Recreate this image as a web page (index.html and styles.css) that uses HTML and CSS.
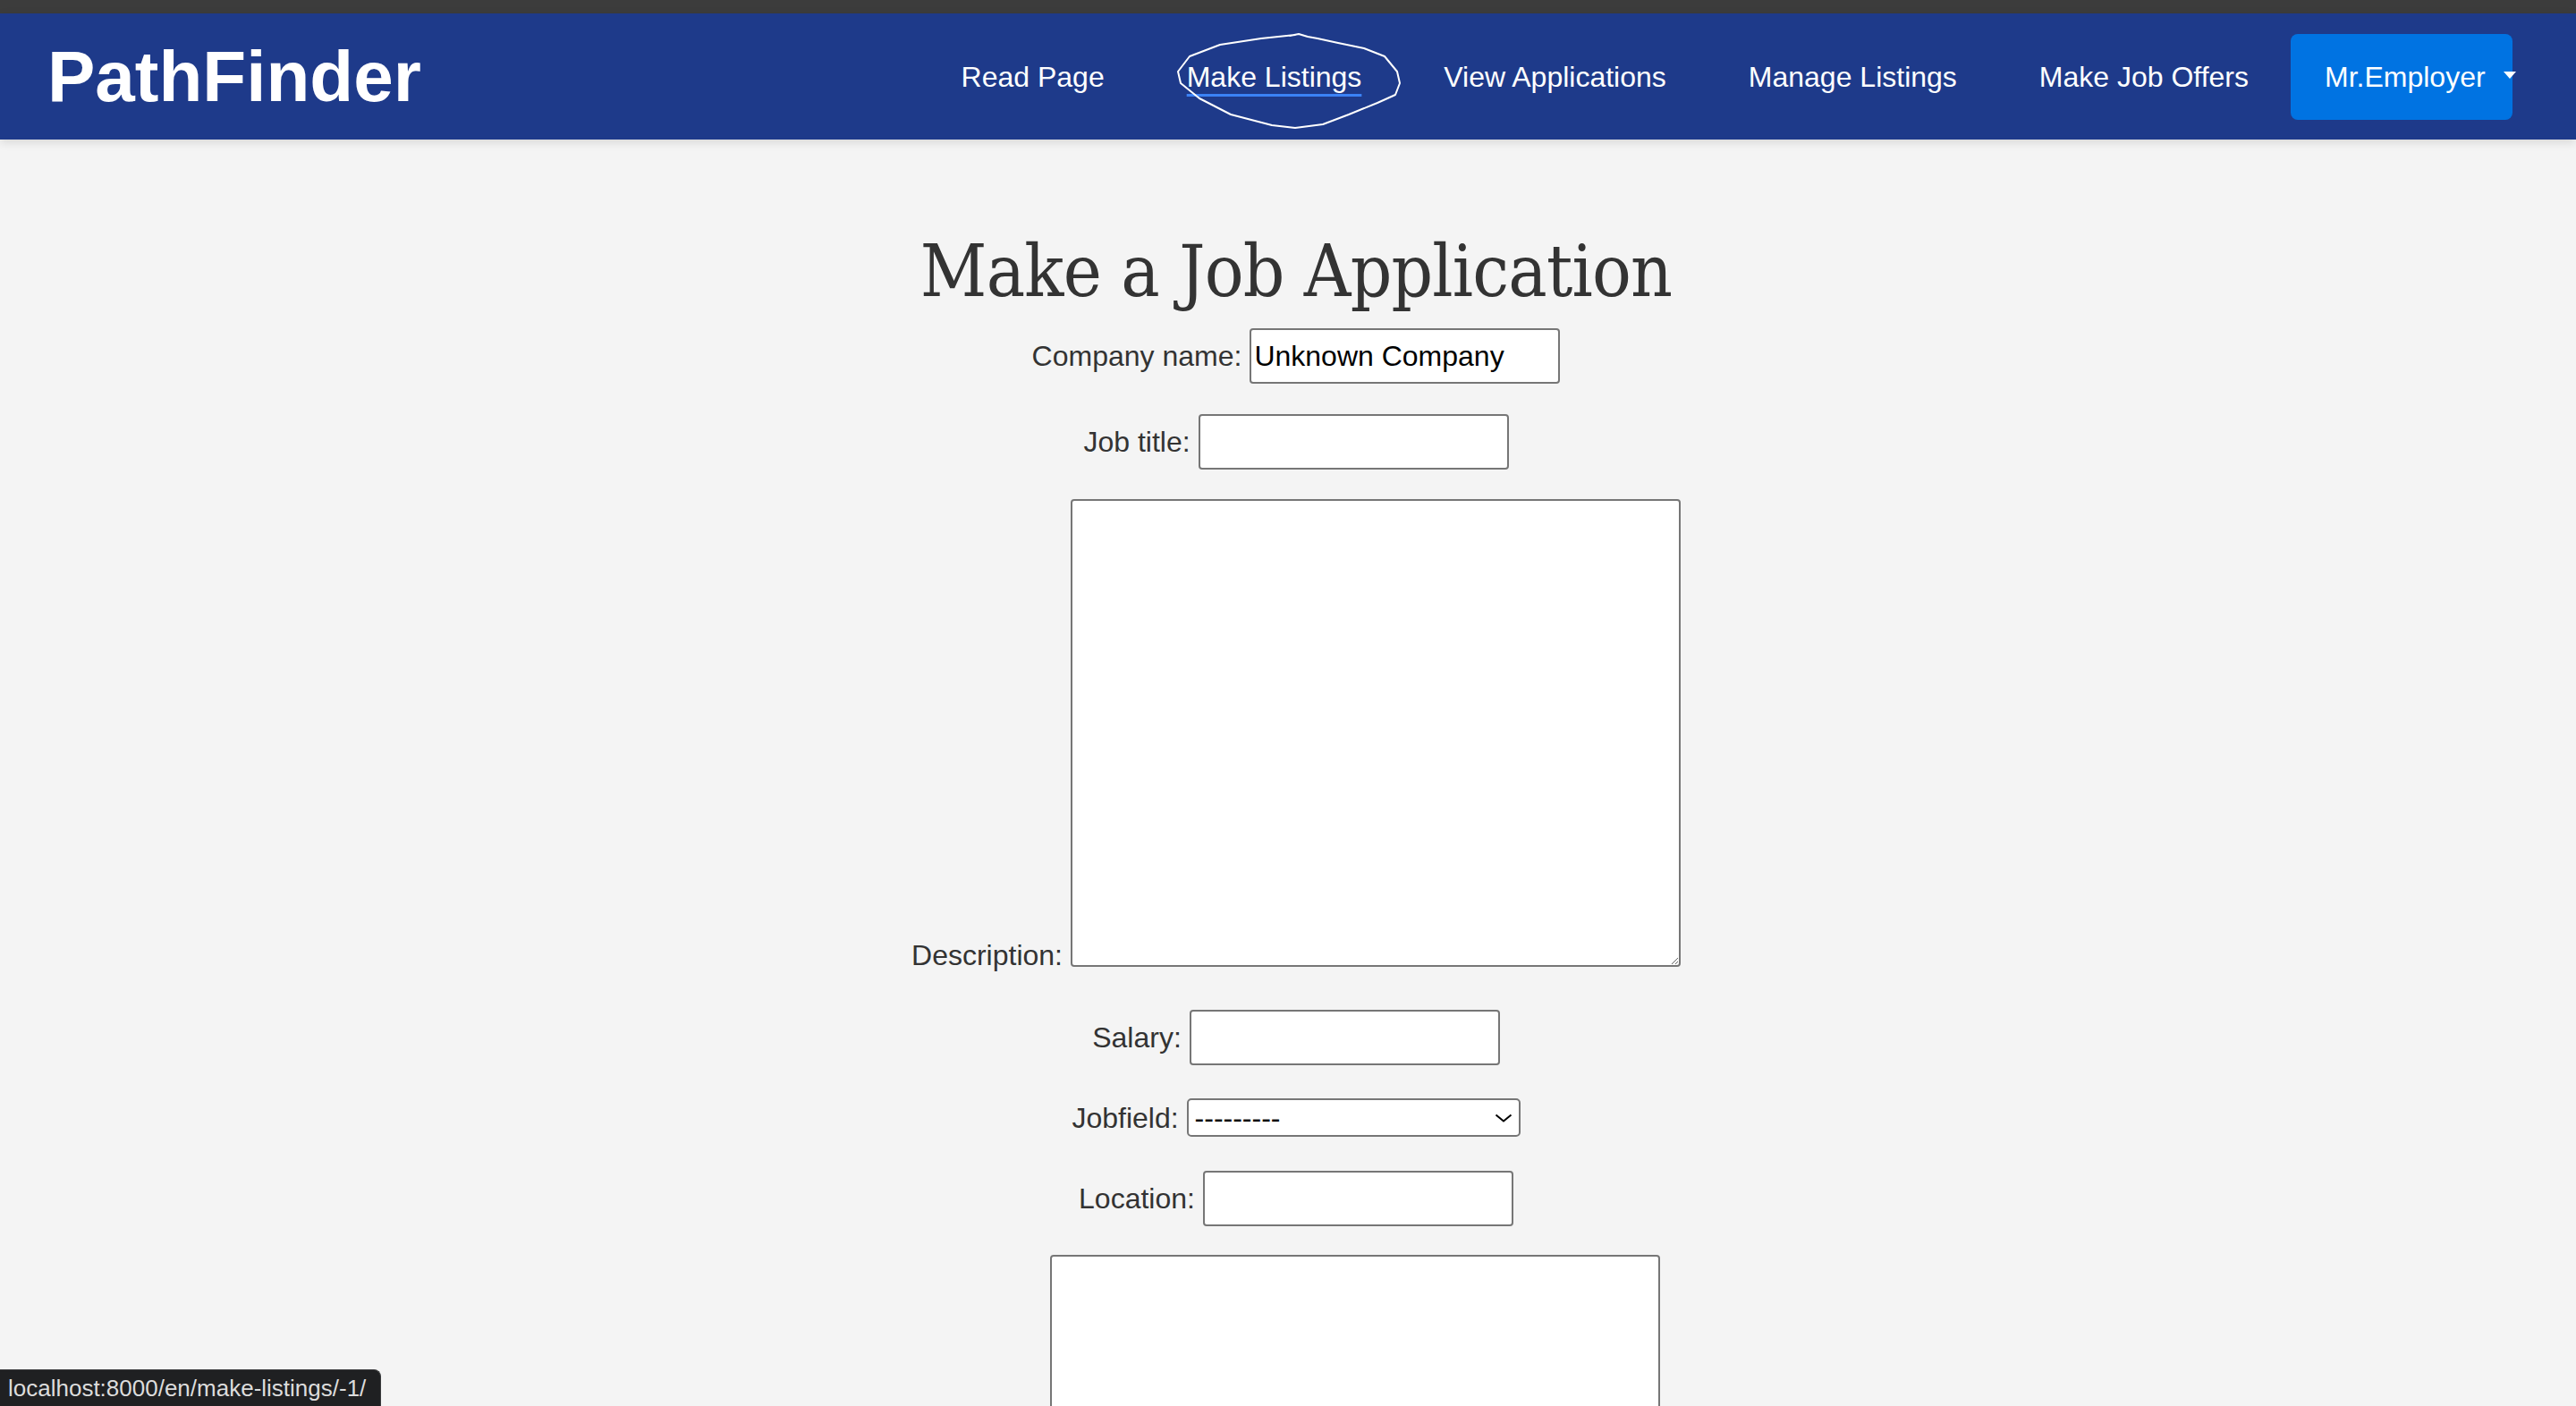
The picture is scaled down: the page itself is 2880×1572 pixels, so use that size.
FILE: index.html
```html
<!DOCTYPE html>
<html lang="en">
<head>
<meta charset="utf-8">
<title>PathFinder</title>
<link rel="stylesheet" href="styles.css">
</head>
<body>
<div class="topstrip"></div>
<header class="navbar">
  <a class="logo" href="#">PathFinder</a>
  <nav class="links">
    <a class="link" href="#">Read Page</a>
    <a class="link active" href="#">Make Listings</a>
    <a class="link" href="#">View Applications</a>
    <a class="link" href="#">Manage Listings</a>
    <a class="link" href="#">Make Job Offers</a>
  </nav>
  <button class="user-btn" type="button">Mr.Employer<span class="caret"></span></button>
  <svg class="scribble" width="280" height="125" viewBox="0 0 280 125" aria-hidden="true">
    <polyline points="148,9 110,13 64,20 30,33 17,50 20,63 41,80 76,98 122,110 148,113 179,109 208,98 240,85 260,76 265,63 262,50 248,33 225,24 196,18 173,13 162,11 152,8 142,10" fill="none" stroke="#ffffff" stroke-width="2" stroke-linejoin="round" stroke-linecap="round"/>
  </svg>
</header>
<main class="content">
  <h1 class="title">Make a Job Application</h1>
  <form class="job-form">
    <div class="row">
      <label class="lbl" for="f-company">Company name:</label>
      <input class="field" id="f-company" type="text" value="Unknown Company">
    </div>
    <div class="row row-job">
      <label class="lbl" for="f-title">Job title:</label>
      <input class="field" id="f-title" type="text">
    </div>
    <div class="row row-area row-desc">
      <label class="lbl" for="f-desc">Description:</label>
      <textarea class="area" id="f-desc"></textarea>
    </div>
    <div class="row row-salary">
      <label class="lbl" for="f-salary">Salary:</label>
      <input class="field" id="f-salary" type="text">
    </div>
    <div class="row row-jobfield">
      <label class="lbl" for="f-jobfield">Jobfield:</label>
      <select class="select" id="f-jobfield">
        <option>---------</option>
      </select>
    </div>
    <div class="row row-location">
      <label class="lbl" for="f-location">Location:</label>
      <input class="field" id="f-location" type="text">
    </div>
    <div class="row row-area row-benefits">
      <label class="lbl lbl-spacer" for="f-benefits"></label>
      <textarea class="area" id="f-benefits" aria-label="Benefits"></textarea>
    </div>
  </form>
</main>
<div class="status">localhost:8000/en/make-listings/-1/</div>
</body>
</html>
```

FILE: styles.css
```css
html, body {
  margin: 0;
  padding: 0;
  overflow: hidden;
}

body {
  background: #f4f4f4;
  font-family: "Liberation Sans", Arial, sans-serif;
  height: 1572px;
}

.topstrip {
  height: 15px;
  background: #3c3c3c;
}

.navbar {
  position: relative;
  z-index: 2;
  height: 141px;
  box-sizing: border-box;
  display: flex;
  align-items: center;
  padding: 0 71px 0 53px;
  background: #1e3a8a;
  box-shadow: 0 3px 10px rgba(0, 0, 0, 0.12);
}

.logo {
  font-family: "Liberation Sans", Arial, sans-serif;
  font-weight: bold;
  font-size: 80px;
  line-height: 80px;
  color: #ffffff;
  text-decoration: none;
}

.links {
  margin-left: auto;
  display: flex;
  align-items: center;
  gap: 92px;
}

.link {
  font-size: 32px;
  line-height: 32px;
  color: #ffffff;
  text-decoration: none;
  white-space: nowrap;
}

.link.active {
  text-decoration: underline;
  text-decoration-color: #3b82f6;
  text-decoration-thickness: 3px;
  text-underline-offset: 8px;
}

.user-btn {
  margin-left: 47px;
  width: 248px;
  height: 96px;
  flex-shrink: 0;
  box-sizing: border-box;
  display: flex;
  align-items: center;
  padding: 0 0 0 38px;
  border: none;
  border-radius: 8px;
  background: #0073e2;
  color: #ffffff;
  font-family: "Liberation Sans", Arial, sans-serif;
  font-size: 32px;
  line-height: 32px;
  white-space: nowrap;
  overflow: visible;
}

.caret {
  flex-shrink: 0;
  width: 0;
  height: 0;
  margin-left: 20px;
  margin-bottom: 4px;
  border-left: 7px solid transparent;
  border-right: 7px solid transparent;
  border-top: 8px solid #ffffff;
}

.scribble {
  position: absolute;
  left: 1300px;
  top: 15px;
  overflow: visible;
  pointer-events: none;
}

.content {
  display: flex;
  flex-direction: column;
  align-items: center;
  padding-left: 18px;
}

.title {
  margin: 107px 0 0;
  font-family: "DejaVu Serif Condensed", "DejaVu Serif", serif;
  font-stretch: condensed;
  font-weight: normal;
  font-size: 81px;
  line-height: 81px;
  letter-spacing: -0.8px;
  color: #333333;
  white-space: nowrap;
}

.job-form {
  margin-top: 23px;
  display: flex;
  flex-direction: column;
  align-items: center;
}

.row {
  display: flex;
  justify-content: center;
  align-items: baseline;
  gap: 9px;
  font-size: 32px;
  color: #333333;
}

.row-job { margin-top: 34px; }
.row-desc { margin-top: 33px; }
.row-salary { margin-top: 48px; }
.row-jobfield { margin-top: 37px; }
.row-location { margin-top: 38px; }
.row-benefits { margin-top: 32px; }

.row-area {
  align-items: flex-end;
}

.row-area .lbl {
  margin-bottom: -6px;
}

.lbl {
  white-space: nowrap;
}

.lbl-spacer {
  display: block;
  width: 124px;
  height: 36px;
}

.field {
  width: 347px;
  height: 62px;
  box-sizing: border-box;
  border: 2px solid #767676;
  border-radius: 4px;
  padding: 0 3px;
  background: #ffffff;
  color: #000000;
  font-family: "Liberation Sans", Arial, sans-serif;
  font-size: 32px;
  outline: none;
}

.select {
  width: 373px;
  height: 43px;
  box-sizing: border-box;
  border: 2px solid #767676;
  border-radius: 5px;
  padding: 0 0 0 7px;
  -webkit-appearance: none;
  appearance: none;
  background: #ffffff url("data:image/svg+xml;utf8,<svg xmlns='http://www.w3.org/2000/svg' viewBox='0 0 20 10' width='20' height='10'><path d='M1.5 1.5 L10 8.5 L18.5 1.5' fill='none' stroke='black' stroke-width='2'/></svg>") no-repeat right 7px center / 20px 10px;
  color: #000000;
  font-family: "Liberation Sans", Arial, sans-serif;
  font-size: 32px;
}

.area {
  width: 682px;
  height: 523px;
  box-sizing: border-box;
  border: 2px solid #767676;
  border-radius: 4px;
  padding: 4px;
  background: #ffffff;
  font-family: "Liberation Mono", monospace;
  font-size: 26px;
  display: block;
}

.status {
  position: fixed;
  left: 0;
  bottom: 0;
  z-index: 5;
  height: 41px;
  box-sizing: border-box;
  padding: 0 16px 0 9px;
  background: #1f2022;
  border: 1px solid #3a3b3d;
  border-left: none;
  border-bottom: none;
  border-top-right-radius: 8px;
  color: #dcdcdc;
  font-family: "Liberation Sans", Arial, sans-serif;
  font-size: 26px;
  line-height: 40px;
  white-space: nowrap;
}
```
